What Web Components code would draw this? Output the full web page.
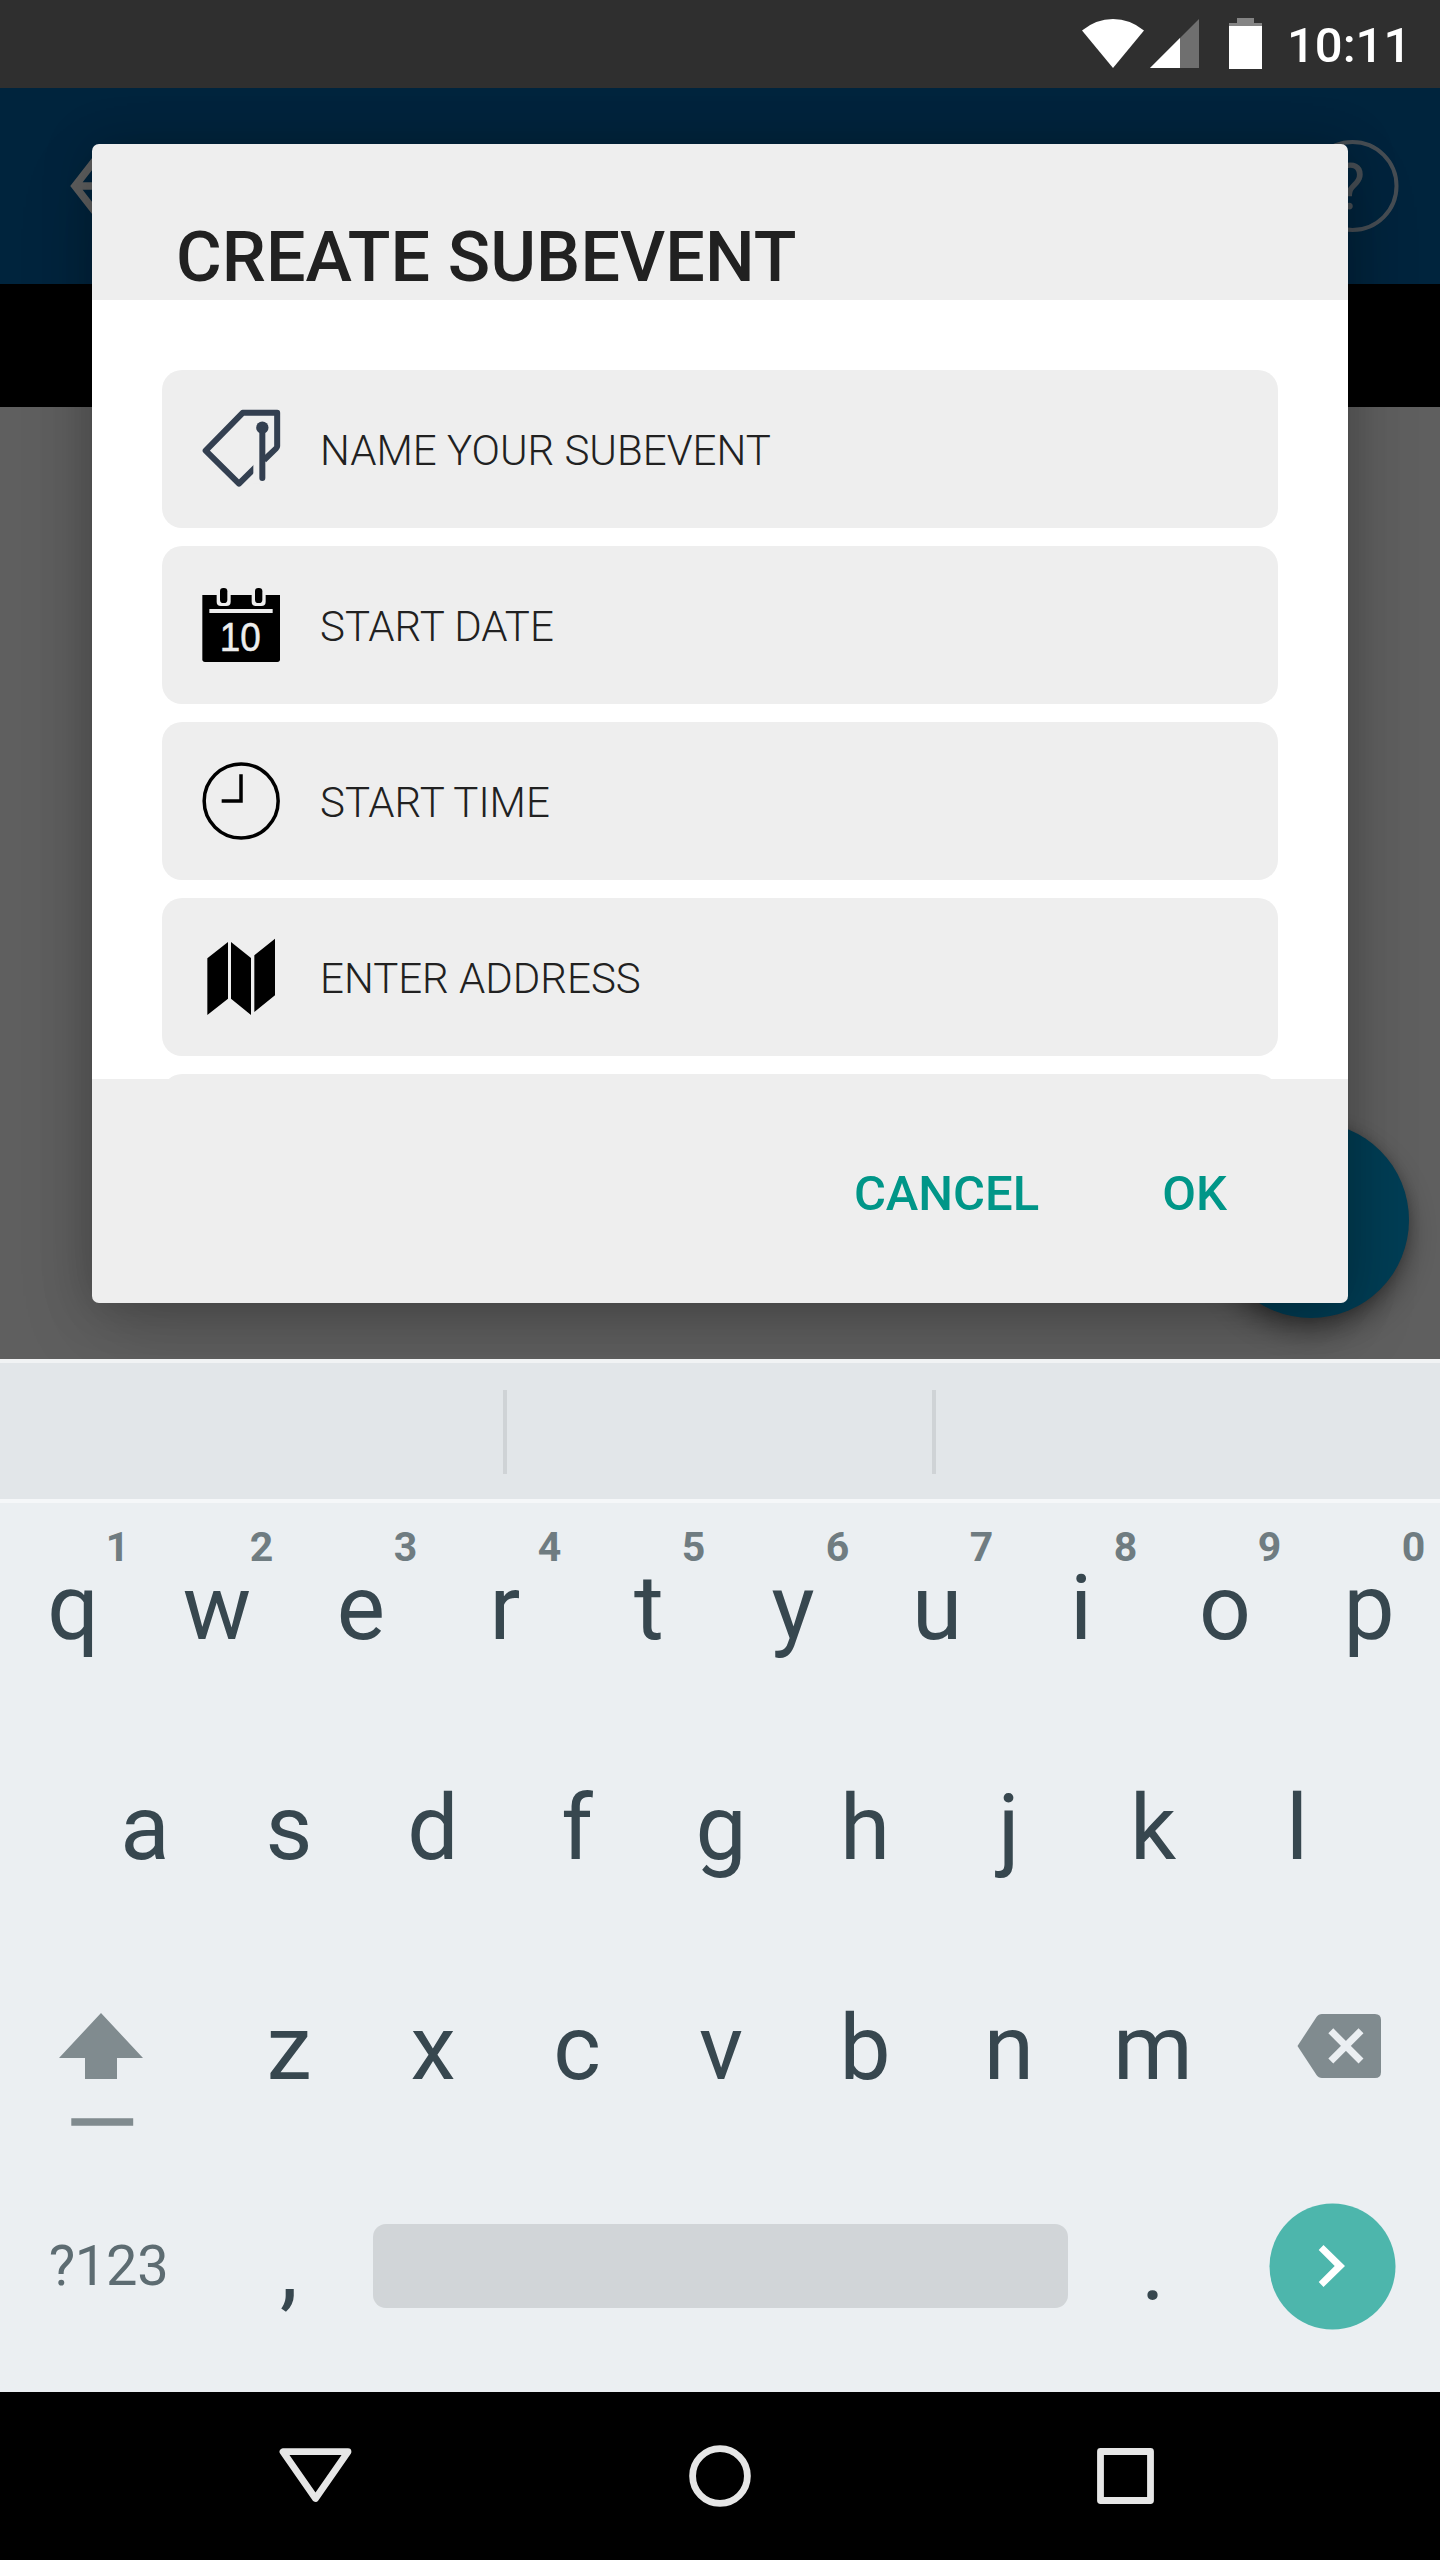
<!DOCTYPE html>
<html lang="en">
<head>
<meta charset="utf-8">
<title>Create subevent</title>
<style>
  html, body { margin: 0; padding: 0; }
  body { width: 1440px; height: 2560px; overflow: hidden; background: #000; font-family: Roboto, "Noto Sans", sans-serif; }
</style>
</head>
<body>
<phone-screen></phone-screen>

<script>
const define = (name, html, setup) => {
  const template = document.createElement('template');
  template.innerHTML = html;
  customElements.define(name, class extends HTMLElement {
    constructor() {
      super();
      this.attachShadow({ mode: 'open' }).append(template.content.cloneNode(true));
    }
    connectedCallback() { if (setup) setup(this, this.shadowRoot); }
  });
};

define('status-bar', `
  <style>
    :host { display: flex; height: 88px; background: #2f2f2f; justify-content: flex-end; align-items: center; }
    svg { display: block; flex: none; }
    span { box-sizing: border-box; width: 154px; padding: 4px 0 0 1px; font-size: 49px; font-weight: 500; line-height: 56px; color: #fff; white-space: nowrap; }
  </style>
  <svg width="206" height="88" viewBox="1080 0 206 88">
    <path d="M1082 30.5Q1096 19 1113 19T1144 30.5L1113 68Z" fill="#fff"/>
    <path d="M1199 19V68H1150Z" fill="#6f6f6f"/>
    <path d="M1180 38V68H1150Z" fill="#fff"/>
    <path d="M1237 18H1254V23H1262V28H1229V23H1237Z" fill="#848484"/>
    <path d="M1229 26H1262V69H1229Z" fill="#fff"/>
  </svg>
  <span>10:11</span>`);

define('app-bar', `
  <style>
    :host { display: flex; height: 196px; background: #00243d; justify-content: space-between; }
    svg { display: block; }
    text { font: 400 64px Roboto, sans-serif; }
  </style>
  <svg width="144" height="196" viewBox="0 88 144 196" fill="none" stroke="#606060" stroke-width="7.500">
    <path d="M103 150L75 186L103 222M77 186H130"/>
  </svg>
  <svg width="144" height="196" viewBox="1296 88 144 196">
    <circle cx="1352.500" cy="186" r="44" fill="none" stroke="#474e54" stroke-width="4"/>
    <text x="1350" y="209" text-anchor="middle" fill="#474e54">?</text>
  </svg>`);

define('field-icon', `
  <style>
    :host { display: block; width: 78px; height: 78px; flex: none; }
    svg { display: none; width: 78px; height: 78px; overflow: visible; }
    :host([name="tag"]) .tag, :host([name="calendar"]) .calendar,
    :host([name="clock"]) .clock, :host([name="map"]) .map { display: block; }
    text { font: 400 123px "Liberation Sans", sans-serif; }
  </style>
  <svg class="tag" viewBox="186 180 234 234" fill="none" stroke="#333f50" stroke-width="18" stroke-linejoin="round">
    <path d="M350 348L297 401L197 302L308 188.500H411.500V289Q411.500 292 408 295.500L372 330" />
    <path d="M340 330H358V400H340Z" fill="#eee" stroke="none"/>
    <path d="M367 240V384" stroke-linecap="round"/>
    <circle cx="367" cy="233" r="18.500" fill="#333f50" stroke="none"/>
  </svg>
  <svg class="calendar" viewBox="186 708 234 234">
    <path d="M187 735H420V928Q420 936 412 936H195Q187 936 187 928Z"/>
    <g fill="#eee">
      <path d="M230 730H272V755Q272 768 259 768H243Q230 768 230 755Z"/>
      <path d="M335 730H377V755Q377 768 364 768H348Q335 768 335 755Z"/>
      <path d="M208 777H398V789H208Z"/>
      <text transform="translate(239 904) scale(.9 1)" stroke="#eee" stroke-width="1.500">10</text>
    </g>
    <rect x="240" y="714" width="22" height="45" rx="10"/>
    <rect x="345" y="714" width="22" height="45" rx="10"/>
  </svg>
  <svg class="clock" viewBox="186 186 234 234" fill="none" stroke="#000" stroke-width="10.500">
    <circle cx="303.500" cy="303" r="111"/>
    <path d="M303 223V303H245"/>
  </svg>
  <svg class="map" viewBox="186 714 234 234">
    <path d="M202 775L264 726V896L202 945ZM273 726L333 774V945L273 896ZM343 766L405 716V886L343 936Z"/>
  </svg>`);

define('form-field', `
  <style>
    :host { display: flex; box-sizing: border-box; flex: none; align-items: center; gap: 40px; height: 158px; padding: 0 40px; border-radius: 20px; background: #eee; }
    span { padding-top: 3px; font-size: 42px; font-weight: 300; line-height: 50px; color: #212121; white-space: nowrap; }
  </style>
  <field-icon></field-icon><span><slot></slot></span>`,
  (host, root) => {
    const icon = host.getAttribute('icon');
    if (icon) root.querySelector('field-icon').setAttribute('name', icon);
  });

define('event-dialog', `
  <style>
    :host { display: flex; flex-direction: column; box-sizing: border-box; width: 1256px; height: 1159px; border-radius: 7px; overflow: hidden; background: #eee;
      box-shadow: 0 28px 76px -8px rgba(0,0,0,.18), 0 2px 50px rgba(0,0,0,.22); }
    header { box-sizing: border-box; height: 156px; padding: 72px 84px 0; font-size: 70px; line-height: 82px; font-weight: 500; letter-spacing: .1px; color: #212121; white-space: nowrap; }
    .list { display: flex; flex-direction: column; gap: 18px; box-sizing: border-box; height: 779px; padding: 70px 70px 0; background: #fff; overflow: hidden; }
    footer { display: flex; flex: 1; align-items: center; justify-content: flex-end; gap: 123px; padding: 5px 121px 0 0; font-size: 49px; line-height: 58px; font-weight: 500; color: #009688; }
  </style>
  <header><slot name="title"></slot></header>
  <div class="list"><slot></slot></div>
  <footer><slot name="actions"></slot></footer>`);

define('app-screen', `
  <style>
    :host { display: block; position: relative; height: 1271px; overflow: hidden; background: #5f5f5f; }
    .strip { height: 123px; background: #000; }
    .fab { position: absolute; left: 1213px; top: 1034px; width: 196px; height: 196px; border-radius: 50%; background: #003d54;
      box-shadow: 0 14px 26px rgba(0,0,0,.38), 0 0 12px rgba(0,0,0,.18); }
    event-dialog { position: absolute; left: 92px; top: 56px; }
  </style>
  <app-bar></app-bar>
  <div class="strip"></div>
  <div class="fab"></div>
  <event-dialog>
    <span slot="title">CREATE SUBEVENT</span>
    <form-field icon="tag">NAME YOUR SUBEVENT</form-field>
    <form-field icon="calendar">START DATE</form-field>
    <form-field icon="clock">START TIME</form-field>
    <form-field icon="map">ENTER ADDRESS</form-field>
    <form-field></form-field>
    <span slot="actions">CANCEL</span>
    <span slot="actions">OK</span>
  </event-dialog>`);

define('key-cap', `
  <style>
    :host { display: block; position: relative; box-sizing: border-box; width: 144px; height: 220px; padding-left: 2px; text-align: center; font-size: 91px; line-height: 220px; color: #37474f; }
    .hint { position: absolute; left: 97.500px; top: 25px; width: 40px; font-size: 41px; font-weight: 700; line-height: 48px; color: #6f7c81; }
  </style>
  <slot></slot><span class="hint"></span>`,
  (host, root) => { root.querySelector('.hint').textContent = host.getAttribute('hint') || ''; });

define('key-row', `
  <style>:host { display: flex; justify-content: center; height: 220px; }</style>
  <slot></slot>`,
  (host) => {
    const hints = host.getAttribute('hints') || '';
    [...(host.getAttribute('keys') || '')].forEach((letter, i) => {
      const key = document.createElement('key-cap');
      key.textContent = letter;
      if (hints[i]) key.setAttribute('hint', hints[i]);
      host.insertBefore(key, host.querySelector('[data-end]'));
    });
  });

define('soft-keyboard', `
  <style>
    :host { display: flex; flex-direction: column; height: 1033px; background: #ebeff2; }
    .suggest { display: flex; box-sizing: border-box; height: 140px; border-top: 4px solid #f1f3f4; background: #e2e6e9; padding: 27px 0 0 503px; gap: 425px; }
    .suggest i { width: 4px; height: 84px; background: #cfd3d6; }
    .rule { height: 4px; background: #f5f7f9; }
    .rows { margin-top: -5px; }
    svg { display: block; flex: none; }
    .sym { box-sizing: border-box; width: 216px; height: 220px; padding-left: 1px; font-size: 56px; letter-spacing: -.3px; line-height: 217px; text-align: center; color: #5d6c72; }
    .spacer { display: flex; box-sizing: border-box; width: 720px; height: 220px; padding: 66px 12px 70px 13px; }
    .spacer i { flex: 1; border-radius: 13px; background: #d1d5d8; }
  </style>
  <div class="suggest"><i></i><i></i></div>
  <div class="rule"></div>
  <div class="rows">
    <key-row keys="qwertyuiop" hints="1234567890"></key-row>
    <key-row keys="asdfghjkl"></key-row>
    <key-row keys="zxcvbnm">
      <svg width="216" height="220" viewBox="0 1938 216 220" fill="#808b8f">
        <path d="M101 2013L143 2058H117V2079H85V2058H59ZM71.300 2118.300H133.200V2125.700H71.300Z"/>
      </svg>
      <svg data-end width="216" height="220" viewBox="1224 1938 216 220">
        <path d="M1297.500 2046L1316.500 2017Q1318.500 2014 1322 2014H1375Q1381 2014 1381 2020V2072Q1381 2078 1375 2078H1322Q1318.500 2078 1316.500 2075Z" fill="#808b8f"/>
        <path d="M1330.800 2030.800L1361 2061M1361 2030.800L1330.800 2061" stroke="#ebeff2" stroke-width="7"/>
      </svg>
    </key-row>
    <key-row>
      <div class="sym">?123</div>
      <key-cap>,</key-cap>
      <div class="spacer"><i></i></div>
      <key-cap>.</key-cap>
      <svg width="216" height="220" viewBox="1224 2158 216 220">
        <circle cx="1332.500" cy="2266.500" r="63" fill="#4db6ac"/>
        <path d="M1323.500 2245L1345 2266L1323.500 2287L1318.700 2282L1334.700 2266L1318.700 2250Z" fill="#fff"/>
      </svg>
    </key-row>
  </div>`);

define('nav-bar', `
  <style>
    :host { display: flex; height: 168px; background: #000; align-items: center; justify-content: center; gap: 305px; }
    svg { display: block; overflow: visible; }
  </style>
  <svg width="100" height="168" viewBox="266 2392 100 168" fill="none" stroke="#e6e6e6" stroke-width="6.800" stroke-linejoin="round">
    <path d="M284 2451.700H349L316.500 2498.500Z"/>
  </svg>
  <svg width="100" height="168" viewBox="670 2392 100 168" fill="none" stroke="#e6e6e6" stroke-width="6.800">
    <circle cx="720" cy="2476" r="27.400"/>
  </svg>
  <svg width="100" height="168" viewBox="1075 2392 100 168" fill="none" stroke="#e6e6e6" stroke-width="6.800" stroke-linejoin="round">
    <path d="M1100.500 2451.500H1150.500V2500.500H1100.500Z"/>
  </svg>`);

define('phone-screen', `
  <style>:host { display: flex; flex-direction: column; width: 1440px; height: 2560px; }</style>
  <status-bar></status-bar>
  <app-screen></app-screen>
  <soft-keyboard></soft-keyboard>
  <nav-bar></nav-bar>`);
</script>
</body>
</html>
